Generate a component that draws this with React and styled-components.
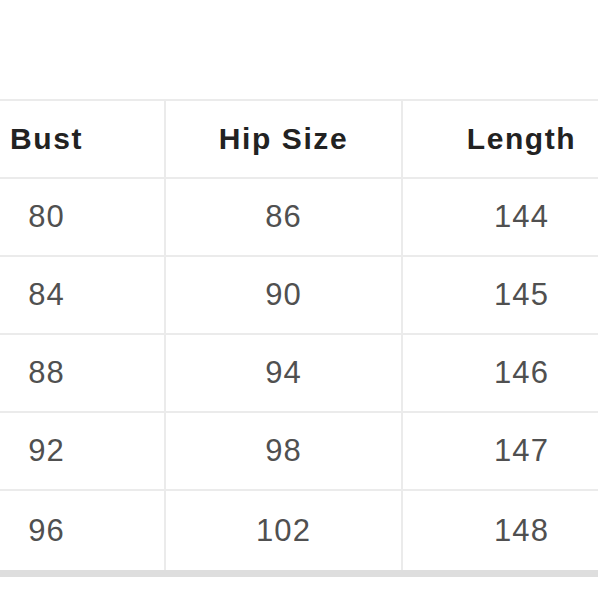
import React from "react";
import styled, { createGlobalStyle } from "styled-components";

const Global = createGlobalStyle`
  html, body { margin: 0; padding: 0; background: #ffffff; }
  body { width: 598px; height: 598px; overflow: hidden; }
`;

const Page = styled.div`
  width: 598px;
  height: 598px;
  overflow: hidden;
  padding-top: 99px;
  box-sizing: border-box;
`;

const Table = styled.div`
  margin-left: -71px;
  width: 711px;
  display: grid;
  grid-template-columns: repeat(3, 237px);
  border-top: 2px solid #ebebeb;
  border-bottom: 7px solid #dedede;
  font-family: "Liberation Sans", Arial, sans-serif;
`;

const Cell = styled.div`
  height: ${(p) => (p.$last ? "79px" : "76px")};
  display: flex;
  align-items: center;
  justify-content: center;
  border-bottom: ${(p) => (p.$last ? "0" : "2px solid #ebebeb")};
  border-right: 2px solid #ebebeb;
  box-sizing: content-box;
  font-size: ${(p) => (p.$head ? "30px" : "31px")};
  letter-spacing: ${(p) => (p.$head ? "1.6px" : "1.1px")};
  font-weight: ${(p) => (p.$head ? 700 : 400)};
  color: ${(p) => (p.$head ? "#222222" : "#505050")};
  &:nth-child(3n) { border-right: 0; }
`;

const header = ["Bust", "Hip Size", "Length"];
const rows = [
  ["80", "86", "144"],
  ["84", "90", "145"],
  ["88", "94", "146"],
  ["92", "98", "147"],
  ["96", "102", "148"],
];

export default function App() {
  return (
    <>
      <Global />
      <Page>
        <Table>
          {header.map((h) => (
            <Cell key={h} $head>{h}</Cell>
          ))}
          {rows.map((r, i) =>
            r.map((v, j) => (
              <Cell key={i + "-" + j} $last={i === rows.length - 1}>{v}</Cell>
            ))
          )}
        </Table>
      </Page>
    </>
  );
}
